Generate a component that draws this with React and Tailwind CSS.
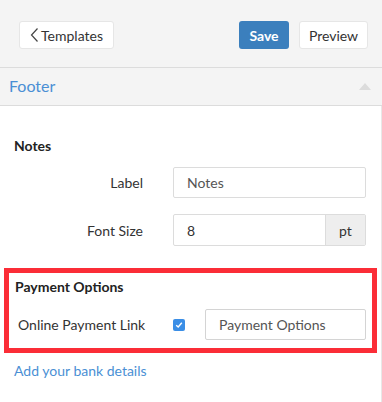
export default function App() {
  return (
    <div className="w-[382px] h-[402px] bg-white overflow-hidden text-[#333]" style={{ fontFamily: "Lato, 'Noto Sans', sans-serif" }}>
      <div className="h-[68px] bg-[#f4f4f4] border-b border-[#dcdcdc] flex items-start justify-between pl-[19px] pr-[14px] pt-[21px]">
        <button className="h-[28px] w-[95px] bg-white border border-[#e6e6e6] rounded-[3px] flex items-center justify-center text-[14px] text-[#333]">
          <svg width="9" height="16" viewBox="0 0 9 16" className="mr-[2px]"><path d="M7.5 1.5 L1.5 8 L7.5 14.5" fill="none" stroke="#444" strokeWidth="1.2" /></svg>
          Templates
        </button>
        <div className="flex gap-[10px]">
          <button className="h-[28px] w-[50px] bg-[#3b7fbd] rounded-[3px] text-white font-bold text-[14px]">Save</button>
          <button className="h-[28px] w-[69px] bg-white border border-[#e6e6e6] rounded-[3px] text-[14px] text-[#333]">Preview</button>
        </div>
      </div>
      <div className="h-[38px] bg-[#f4f4f4] border-b border-[#dcdcdc] flex items-center justify-between pl-[9px] pr-[11px]">
        <span className="text-[16px] text-[#4a8fd4] -mt-[2px]">Footer</span>
        <svg width="12" height="7" viewBox="0 0 12 7"><path d="M0 7 L6 0 L12 7 Z" fill="#dcdcdc" /></svg>
      </div>
      <div className="h-[296px] border-r border-[#e8e8e8]">
        <div className="pt-[30px] pl-[14px] text-[14px] font-bold leading-[20px] text-[#222]">Notes</div>
        <div className="flex items-center mt-[11px]">
          <div className="w-[143px] text-right text-[14px] text-[#333]">Label</div>
          <div className="ml-[30px] w-[193px] h-[31px] border border-[#dcdcdc] rounded-[2px] flex items-center pl-[13px] text-[14px] text-[#555]">Notes</div>
        </div>
        <div className="flex items-center mt-[16px]">
          <div className="w-[143px] text-right text-[14px] text-[#333]">Font Size</div>
          <div className="ml-[30px] w-[193px] h-[32px] border border-[#dcdcdc] rounded-[2px] flex">
            <div className="flex-1 flex items-center pl-[13px] text-[14px] text-[#333]">8</div>
            <div className="w-[40px] bg-[#eeeeee] border-l border-[#dcdcdc] flex items-center justify-center text-[14px] text-[#333]">pt</div>
          </div>
        </div>
        <div className="mt-[22px] ml-[4px] w-[373px] h-[85px] border-[5px] border-[#fb2d37]">
          <div className="pl-[6px] pt-[4px] text-[14px] font-bold leading-[20px] text-[#222]">Payment Options</div>
          <div className="flex items-center mt-[12px]">
            <div className="pl-[9px] w-[164px] text-[14px] text-[#333]">Online Payment Link</div>
            <div className="w-[12px] h-[12px] rounded-[2px] bg-[#3a8ee6] flex items-center justify-center">
              <svg width="8" height="8" viewBox="0 0 8 8"><path d="M1.2 4.2 L3.2 6 L6.8 1.8" fill="none" stroke="white" strokeWidth="1.4" /></svg>
            </div>
            <div className="ml-[20px] w-[161px] h-[31px] border border-[#d4d4d4] rounded-[2px] flex items-center pl-[13px] text-[14px] text-[#555]">Payment Options</div>
          </div>
        </div>
        <div className="pl-[14px] mt-[8px] text-[14px] text-[#4a8fd4] leading-[20px]">Add your bank details</div>
      </div>
    </div>
  );
}
